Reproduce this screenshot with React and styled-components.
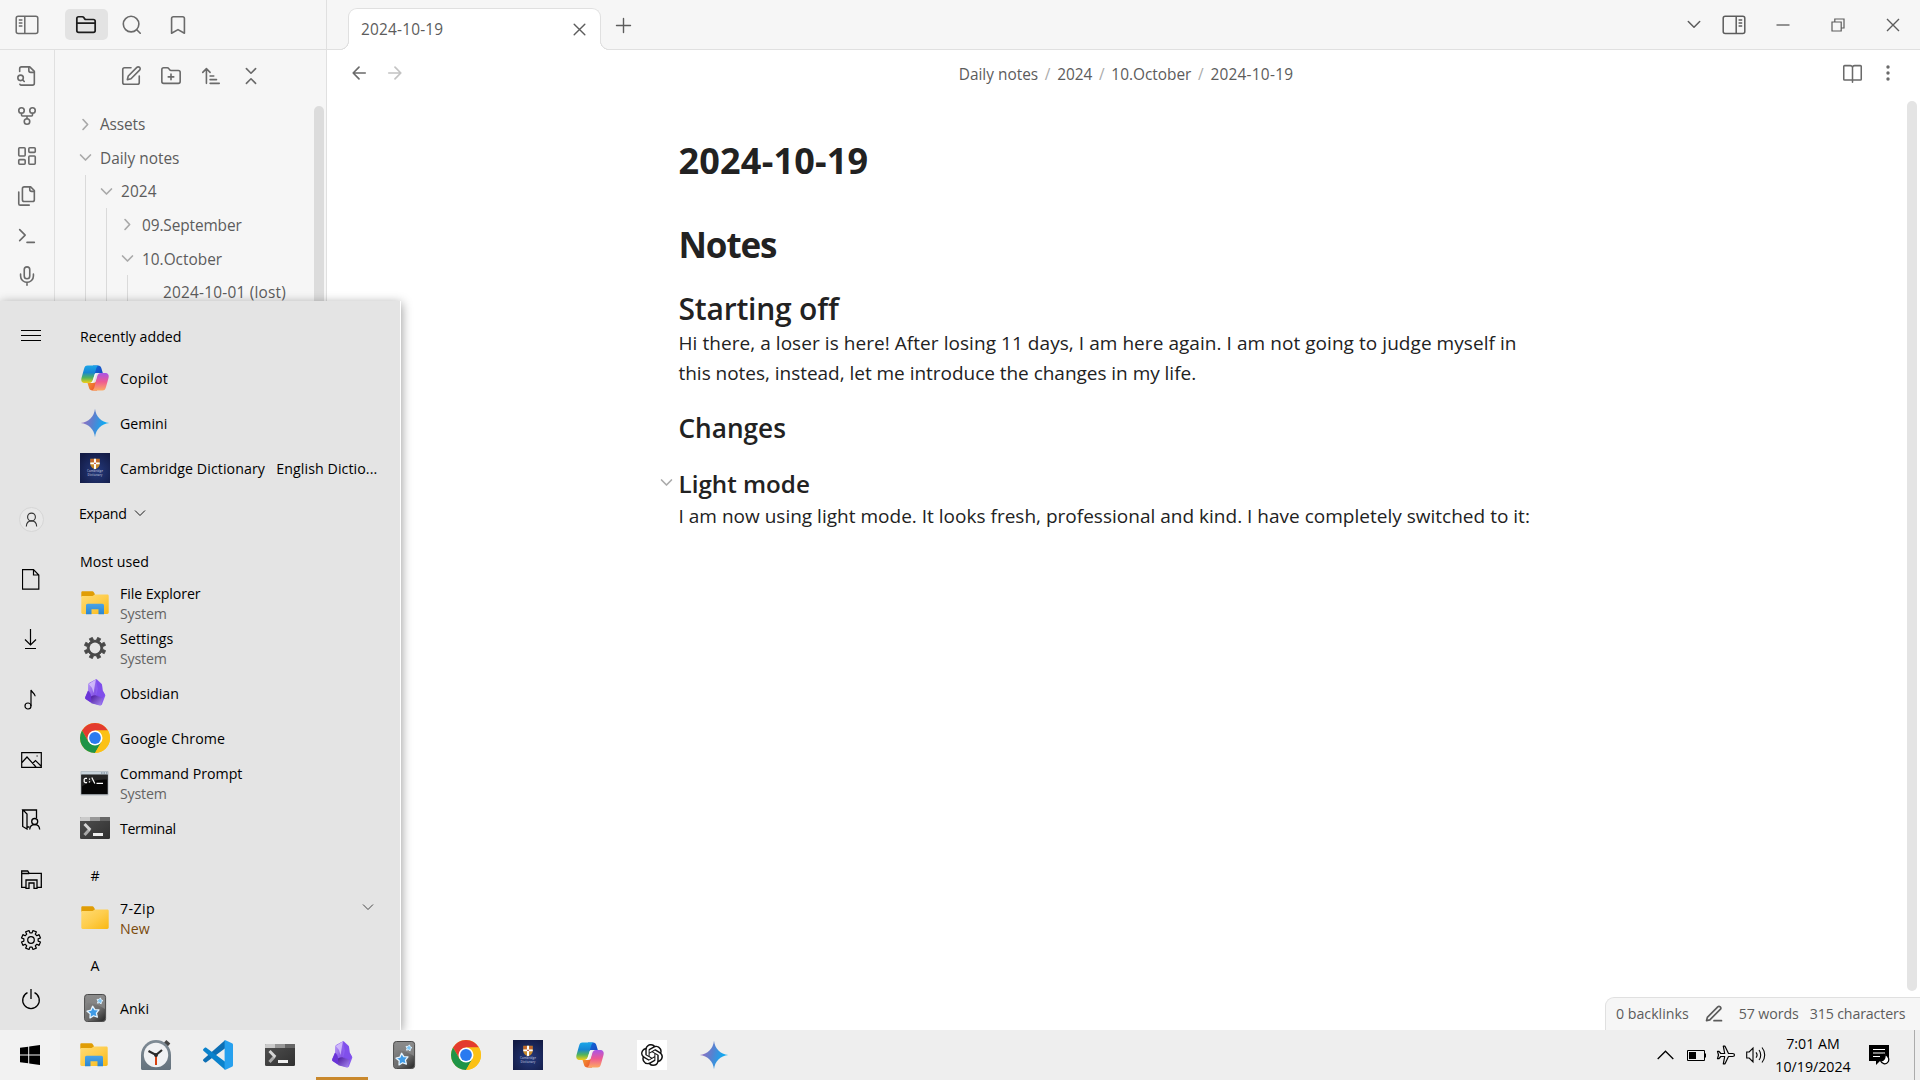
import React from 'react';
import styled, { createGlobalStyle, css } from 'styled-components';
import { SiOpenai } from 'react-icons/si';

const Global = createGlobalStyle`
  * { box-sizing: border-box; }
  body { margin: 0; overflow: hidden; background: #fff; font-family: 'Open Sans', 'Noto Sans', sans-serif; color: #222; }
  svg { display: block; flex: none; }
`;

/* ---------- shell ---------- */
const Desktop = styled.div`
  position: relative;
  width: 1920px;
  height: 1080px;
  display: flex;
  flex-direction: column;
  overflow: hidden;
`;
const ObsidianWindow = styled.div`
  height: 1030px;
  display: flex;
  position: relative;
`;
const SidePane = styled.div`
  width: 327px;
  border-right: 1px solid #e0e0e0;
  background: #f6f6f6;
  display: flex;
  flex-direction: column;
`;
const MainPane = styled.div`
  flex: 1;
  display: flex;
  flex-direction: column;
  min-width: 0;
`;
const Header = styled.div`
  height: 50px;
  flex: none;
  border-bottom: 1px solid #e0e0e0;
  background: #f6f6f6;
  display: flex;
  color: #5c5c5c;
`;
const ToggleSlot = styled.div`
  width: 54px;
  height: 50px;
  display: flex;
  align-items: center;
  justify-content: center;
  color: #6a6a6a;
`;
const SideTabs = styled.div`
  display: flex;
  gap: 3px;
  padding: 9px 0 0 11px;
`;
const SideTab = styled.div`
  width: 43px;
  height: 31px;
  border-radius: 5px;
  display: flex;
  align-items: center;
  justify-content: center;
  padding-right: 1px;
  color: ${(p) => (p.$active ? '#1c1c1c' : '#6a6a6a')};
  background: ${(p) => (p.$active ? '#e3e3e3' : 'transparent')};
`;
const Label = styled.span`
  white-space: pre;
  letter-spacing: ${(p) => p.$ls || 0}px;
`;

/* ---------- left sidebar ---------- */
const SideBody = styled.div`
  flex: 1;
  display: flex;
  min-height: 0;
`;
const Ribbon = styled.div`
  width: 55px;
  border-right: 1px solid #e0e0e0;
  padding-top: 6px;
  display: flex;
  flex-direction: column;
  align-items: center;
  color: #6a6a6a;
`;
const RibbonItem = styled.div`
  height: 40px;
  display: flex;
  align-items: center;
`;
const Explorer = styled.div`
  flex: 1;
  position: relative;
  overflow: hidden;
`;
const ExplorerTools = styled.div`
  height: 52px;
  display: flex;
  justify-content: center;
  color: #6a6a6a;
`;
const Tool = styled.div`
  width: 40px;
  display: flex;
  align-items: center;
  justify-content: center;
`;
const Tree = styled.div`
  padding-top: 5.4px;
`;
const TreeRow = styled.div`
  height: 33.6px;
  display: flex;
  align-items: center;
  gap: 9px;
  padding-left: 22px;
  font-size: 15.4px;
  color: #5c5c5c;
  & > span {
    padding-top: 1px;
  }
`;
const Twist = styled.div`
  width: 14px;
  height: 17px;
  color: #a9a9a9;
`;
const Branch = styled.div`
  margin-left: 30px;
  border-left: 1px solid #dadada;
`;
const BranchRows = styled.div`
  margin-left: -10px;
`;
const ScrollThumb = styled.div`
  position: absolute;
  width: 10px;
  border-radius: 5px;
  background: ${(p) => p.$color};
  top: ${(p) => p.$top}px;
  right: ${(p) => p.$right}px;
  height: ${(p) => p.$h}px;
`;

/* ---------- tab strip ---------- */
const foot = css`
  content: '';
  position: absolute;
  bottom: 0;
  width: 9px;
  height: 9px;
`;
const DocTab = styled.div`
  position: relative;
  margin: 8px 0 -1px 21px;
  width: 253px;
  height: 42px;
  border: 1px solid #e0e0e0;
  border-bottom: 0;
  border-radius: 9px 9px 0 0;
  background: #fff;
  display: flex;
  align-items: center;
  justify-content: space-between;
  padding: 0 12px 1px 12px;
  font-size: 15.4px;
  color: #5c5c5c;
  &::before {
    ${foot}
    left: -9px;
    background: radial-gradient(circle at 0 0, #f6f6f6 7.6px, #e0e0e0 8.2px 8.8px, #fff 9.2px);
  }
  &::after {
    ${foot}
    right: -9px;
    background: radial-gradient(circle at 100% 0, #f6f6f6 7.6px, #e0e0e0 8.2px 8.8px, #fff 9.2px);
  }
`;
const NewTab = styled.div`
  width: 44px;
  padding-top: 2px;
  display: flex;
  align-items: center;
  justify-content: center;
`;
const WindowControls = styled.div`
  margin-left: auto;
  display: flex;
  align-items: center;
`;
const Control = styled.div`
  width: ${(p) => p.$w}px;
  display: flex;
  justify-content: center;
  color: #5c5c5c;
`;

/* ---------- document ---------- */
const ViewHeader = styled.div`
  height: 50px;
  padding-left: 5px;
  display: grid;
  grid-template-columns: 1fr auto 1fr;
  align-items: center;
  color: #6a6a6a;
`;
const NavGroup = styled.div`
  display: flex;
  padding: 0 0 4px 9px;
`;
const ActionGroup = styled.div`
  display: flex;
  justify-content: flex-end;
  padding: 0 15px 4px 0;
`;
const NavBtn = styled.div`
  width: ${(p) => p.$w || 36}px;
  display: flex;
  justify-content: center;
  align-items: center;
  opacity: ${(p) => (p.$off ? 0.4 : 1)};
`;
const Crumbs = styled.div`
  display: flex;
  gap: 7.5px;
  padding-bottom: 1px;
  font-size: 15.4px;
  color: #5c5c5c;
`;
const Slash = styled.span`
  width: 4px;
  color: #ababab;
  display: flex;
  justify-content: center;
`;
const Editor = styled.div`
  flex: 1;
  position: relative;
  padding: 36.5px 0 0 351.5px;
`;
const Title = styled.h1`
  margin: 0;
  font-size: 36px;
  line-height: 48px;
  font-weight: 700;
  letter-spacing: 0.2px;
`;
const H1 = styled.h1`
  margin: 36px 0 0;
  font-size: 35px;
  line-height: 48px;
  font-weight: 700;
  letter-spacing: -1.1px;
`;
const H2 = styled.h2`
  margin: 22px 0 0;
  font-size: 30px;
  line-height: 36px;
  font-weight: 600;
  letter-spacing: -0.2px;
`;
const H3 = styled.h3`
  margin: 22.3px 0 0;
  font-size: 26.2px;
  line-height: 36px;
  font-weight: 600;
`;
const H4 = styled.h4`
  position: relative;
  margin: 20.8px 0 0;
  font-size: 24.2px;
  line-height: 34px;
  font-weight: 600;
`;
const Fold = styled.span`
  position: absolute;
  left: -21px;
  top: 7px;
  color: #ababab;
`;
const Para = styled.p`
  margin: ${(p) => p.$mt || 0}px 0 0;
  font-size: 19px;
  line-height: 30px;
  display: flex;
  flex-direction: column;
`;
const StatusBar = styled.div`
  position: absolute;
  right: 0;
  bottom: 0;
  width: 315px;
  height: 33px;
  border: solid #e0e0e0;
  border-width: 1px 0 0 1px;
  border-top-left-radius: 9px;
  background: #f6f6f6;
  display: flex;
  align-items: center;
  padding: 0 0 1px 10px;
  font-size: 14.2px;
  color: #5c5c5c;
`;
const StatusIcon = styled.div`
  width: 50px;
  display: flex;
  justify-content: center;
  padding-left: 1px;
`;
const StatusGap = styled.div`
  width: 11px;
`;

/* ---------- start menu ---------- */
const StartMenu = styled.div`
  position: absolute;
  left: 0;
  top: 301px;
  width: 401px;
  height: 729px;
  background: #e4e4e4;
  border-right: 1px solid #fff;
  box-shadow: 1px 2px 10px rgba(0, 0, 0, 0.38);
  display: flex;
  color: #000;
  font-size: 14.2px;
`;
const Rail = styled.div`
  width: 62px;
  display: flex;
  flex-direction: column;
  padding-top: 5px;
`;
const RailItem = styled.div`
  height: 60px;
  margin-top: ${(p) => (p.$push ? 'auto' : 0)};
  display: flex;
  align-items: center;
  justify-content: center;
  padding-bottom: 1px;
`;
const Avatar = styled.div`
  width: 25px;
  height: 25px;
  border-radius: 50%;
  border: 1px solid #d6d6d6;
  background: #e8e8e8;
  display: flex;
  align-items: center;
  justify-content: center;
  color: #333;
`;
const AppList = styled.div`
  flex: 1;
  padding: 10px 20px 0 18px;
  display: flex;
  flex-direction: column;
`;
const GroupTitle = styled.div`
  height: 45px;
  line-height: 51px;
`;
const ExpandRow = styled.div`
  height: 45px;
  display: flex;
  align-items: center;
  gap: 7px;
  margin-left: -1px;
`;
const Letter = styled.div`
  height: 45px;
  line-height: 52px;
  width: 30px;
  text-align: center;
`;
const AppRow = styled.div`
  height: 45px;
  display: flex;
  align-items: center;
  gap: 10px;
  & > span {
    padding-top: ${(p) => (p.$drop ? 2 : 0)}px;
  }
`;
const AppIcon = styled.div`
  width: 30px;
  height: 30px;
`;
const AppText = styled.div`
  display: flex;
  flex-direction: column;
  line-height: 20px;
  padding-top: 2px;
  flex: 1;
`;
const Sub = styled.span`
  color: ${(p) => (p.$fresh ? '#7a4a0c' : '#636363')};
  letter-spacing: ${(p) => (p.$fresh ? 0.1 : -0.2)}px;
`;
const RowChevron = styled.div`
  padding: 0 6px 0 0;
  height: 30px;
  color: #333;
`;

/* ---------- taskbar ---------- */
const Taskbar = styled.div`
  position: relative;
  height: 50px;
  background: #eeeeee;
  display: flex;
`;
const StartButton = styled.div`
  width: 60px;
  background: #f2f2f2;
  display: flex;
  align-items: center;
  justify-content: center;
`;
const TaskItem = styled.div`
  width: 52px;
  margin: 0 5px;
  display: flex;
  align-items: center;
  justify-content: center;
  border-bottom: 3px solid ${(p) => (p.$active ? '#c9882c' : 'transparent')};
  padding-top: 3px;
`;
const TaskItems = styled.div`
  display: flex;
  padding-left: 3px;
`;
const Tray = styled.div`
  margin-left: auto;
  display: flex;
  align-items: center;
  color: #000;
`;
const TraySlot = styled.div`
  width: ${(p) => p.$w}px;
  display: flex;
  justify-content: center;
`;
const Clock = styled.div`
  width: 87px;
  padding-right: 3px;
  display: flex;
  flex-direction: column;
  align-items: center;
  font-size: 14.2px;
  line-height: 23px;
`;
const ShowDesktop = styled.div`
  width: 6px;
  height: 50px;
  border-left: 1px solid #ababab;
`;

/* ---------- line icons ---------- */
const Line = ({ s = 22, w = 1.75, d, children, vb = '0 0 24 24', h, cap = 'round' }) => (
  <svg width={s} height={h || s} viewBox={vb} fill="none" stroke="currentColor" strokeWidth={w} strokeLinecap={cap} strokeLinejoin={cap === 'round' ? 'round' : 'miter'}>
    {d && <path d={d} />}
    {children}
  </svg>
);
const PanelToggle = ({ flip }) => (
  <svg width="24" height="20" viewBox="0 0 24 20" fill="none" stroke="currentColor" strokeWidth="1.5" transform={flip ? 'scale(-1 1)' : undefined}>
    <rect x="1.2" y="1.2" width="21.6" height="17.4" rx="2" />
    <path d="M9.8 1v18M3.8 5h3.6M3.8 8h3.6M3.8 11h3.6" />
  </svg>
);
const ChevR = () => <Line s={17} w={2.4} d="m8.500 5 6.500 7-6.500 7" />;
const ChevD = () => <Line s={17} w={2.4} d="m5 8.500 7 7 7-7" />;
const ThinDown = () => <Line s={12} h={8} vb="0 0 12 8" w={0.9} cap="butt" d="M1 1.5 6 6.5 11 1.5" />;

const ribbon = [
  <Line><path d="M14 2v4a2 2 0 0 0 2 2h4" /><path d="M4.27 21A2 2 0 0 0 6 22h12a2 2 0 0 0 2-2V7l-5-5H6a2 2 0 0 0-2 2v3" /><path d="m9 18-1.5-1.5" /><circle cx="5" cy="14" r="3" /></Line>,
  <Line><circle cx="12" cy="18" r="3" /><circle cx="6" cy="6" r="3" /><circle cx="18" cy="6" r="3" /><path d="M18 9v2c0 .6-.4 1-1 1H7c-.6 0-1-.4-1-1V9M12 12v3" /></Line>,
  <Line><rect x="3" y="3" width="7" height="9" rx="1" /><rect x="14" y="3" width="7" height="5" rx="1" /><rect x="14" y="12" width="7" height="9" rx="1" /><rect x="3" y="16" width="7" height="5" rx="1" /></Line>,
  <Line><path d="M15 2v3a2 2 0 0 0 2 2h3" /><path d="M9 18a2 2 0 0 1-2-2V4a2 2 0 0 1 2-2h7l4 4v10a2 2 0 0 1-2 2Z" /><path d="M3 7.6v12.8A1.6 1.6 0 0 0 4.6 22h9.8" /></Line>,
  <Line d="m4 17 6-6-6-6M12 19h8" />,
  <Line d="M12 2a3 3 0 0 0-3 3v7a3 3 0 0 0 6 0V5a3 3 0 0 0-3-3ZM19 10v2a7 7 0 0 1-14 0v-2M12 19v3" />,
];
const explorerTools = [
  'M12 3H5a2 2 0 0 0-2 2v14a2 2 0 0 0 2 2h14a2 2 0 0 0 2-2v-7M18.375 2.625a2.121 2.121 0 1 1 3 3L12 15l-4 1 1-4Z',
  'M12 10v6M9 13h6M20 20a2 2 0 0 0 2-2V8a2 2 0 0 0-2-2h-7.9a2 2 0 0 1-1.69-.9L9.6 3.9A2 2 0 0 0 7.93 3H4a2 2 0 0 0-2 2v13a2 2 0 0 0 2 2Z',
  'm3 8 4-4 4 4M7 4v16M11 12h4M11 16h7M11 20h10',
  'm7 20 5-5 5 5M7 4l5 5 5-5',
];

/* ---------- application icons ---------- */
const gearPath = (teeth, ro, ri, a, b) => {
  const pts = [];
  for (let i = 0; i < teeth; i++) {
    const c = ((i + 0.5) * 2 * Math.PI) / teeth;
    [[ri, -b], [ro, -a], [ro, a], [ri, b]].forEach(([r, o]) => pts.push(`${(r * Math.cos(c + o)).toFixed(2)} ${(r * Math.sin(c + o)).toFixed(2)}`));
  }
  return `M${pts.join('L')}Z`;
};
const GearSolid = () => (
  <svg width="30" height="30" viewBox="-15 -15 30 30">
    <path fill="#484848" stroke="#484848" strokeWidth="1" strokeLinejoin="round" d={gearPath(8, 10.8, 7.8, 0.15, 0.2)} />
    <circle r="5.4" fill="#e4e4e4" />
  </svg>
);
const GearLine = () => (
  <svg width="22" height="22" viewBox="-11 -11 22 22" fill="none" stroke="#000" strokeWidth="1.2" strokeLinejoin="round">
    <path d={gearPath(8, 9.7, 7.2, 0.19, 0.24)} />
    <circle r="3.3" />
  </svg>
);
const Copilot = ({ id }) => (
  <svg width="30" height="30" viewBox="0 0 30 30">
    <defs>
      <linearGradient id={`${id}a`} x1="0" y1="0" x2="0" y2="1"><stop offset="0" stopColor="#1ba6e8" /><stop offset=".4" stopColor="#1786d4" /><stop offset=".7" stopColor="#52b45c" /><stop offset="1" stopColor="#f5cf16" /></linearGradient>
      <linearGradient id={`${id}b`} x1="0" y1="0" x2="0" y2="1"><stop offset="0" stopColor="#a855e8" /><stop offset=".5" stopColor="#ee5a92" /><stop offset="1" stopColor="#fdab62" /></linearGradient>
      <linearGradient id={`${id}c`} x1="0" y1="0" x2="1" y2="1"><stop offset="0" stopColor="#0f6fe0" /><stop offset="1" stopColor="#1b3fb5" /></linearGradient>
      <linearGradient id={`${id}d`} x1="0" y1="0" x2="1" y2="1"><stop offset="0" stopColor="#f8b030" /><stop offset="1" stopColor="#e8442c" /></linearGradient>
    </defs>
    <path fill={`url(#${id}c)`} d="M13 2.500h5c2 0 2.800 1 3.400 2.800L22.800 10H17c-2 0-3 .8-3.600 2.500L12 16z" />
    <path fill={`url(#${id}d)`} d="M17 27.500h-4.500c-2 0-3-1-3.500-2.800L7.500 20H13c2 0 2.800-.8 3.400-2.500L18 13z" />
    <path fill={`url(#${id}a)`} d="M7.500 2.500H19c-1.600.2-2.300 1.400-2.800 3L13 16.500c-.7 2.300-1.700 3.500-4 3.500H5c-3 0-4.300-2-3.500-5L4 6c.6-2.400 1.500-3.500 3.500-3.500z" />
    <path fill={`url(#${id}b)`} d="M22.500 27.500H11.500c1.600-.2 2.300-1.400 2.800-3L17.200 13.500c.6-2.300 1.600-3.500 3.900-3.500H25c3 0 4.300 2 3.500 5L26 24c-.6 2.400-1.500 3.500-3.500 3.500z" />
    <path fill="#fff" opacity=".75" d="M15.200 10.200h2.600c-1.400.5-2 1.600-2.400 3L14 18c-.4 1.200-.9 1.800-2 2h-1.500c1.400-.5 2-1.900 2.500-3.500z" />
  </svg>
);
const Gemini = ({ id }) => (
  <svg width="30" height="30" viewBox="0 0 30 30">
    <defs><linearGradient id={id} x1="0" y1="0" x2="1" y2=".25"><stop offset=".1" stopColor="#9a6fc0" /><stop offset=".5" stopColor="#5a80cf" /><stop offset=".9" stopColor="#12a8f0" /></linearGradient></defs>
    <path fill={`url(#${id})`} d="M15 .8C15.800 8.600 21.400 14.200 29.200 15 21.400 15.800 15.800 21.400 15 29.200 14.200 21.400 8.600 15.800.8 15 8.600 14.200 14.200 8.600 15 .8z" />
  </svg>
);
const Crest = styled.div`
  width: 30px;
  height: 30px;
  background: radial-gradient(circle at 55% 60%, #24397c, #131b45 85%);
  color: #a3abc9;
  display: flex;
  flex-direction: column;
  align-items: center;
  padding-top: 5px;
  font-size: 3px;
  font-weight: 600;
  line-height: 3.5px;
`;
const Cambridge = () => (
  <Crest>
    <svg width="10" height="12" viewBox="0 0 11 12">
      <path fill="#c98a2c" d="M.3.3h10.400v5.700c0 3-2.400 4.700-5.200 5.900C2.700 10.700.3 9 .3 6z" />
      <path fill="#c2452f" d="M.8.8h3.200v3H.8zM7 .8h3.200v3H7z" opacity=".55" />
      <path fill="#fff" d="M4.400.3h2.200v11L5.500 11.900 4.400 11.300zM.3 4.300h10.400v2H.3z" />
      <path fill="#c2452f" d="M4.600 4.500h1.800v1.600H4.600z" />
    </svg>
    <span>Cambridge</span>
    <span>Dictionary</span>
  </Crest>
);
const Folder = ({ id, explorer }) => (
  <svg width="30" height="30" viewBox="0 0 30 30">
    <defs>
      <linearGradient id={id} x1="0" y1="0" x2="1" y2="1"><stop offset="0" stopColor="#ffdb74" /><stop offset=".5" stopColor="#fecd4c" /><stop offset="1" stopColor="#f9b812" /></linearGradient>
      <linearGradient id={`${id}b`} x1="0" y1="0" x2="0" y2="1"><stop offset="0" stopColor="#4aa3e8" /><stop offset="1" stopColor="#2b86d0" /></linearGradient>
    </defs>
    <path fill="#e09d05" d="M1.300 4.700c0-.9.5-1.400 1.300-1.400h9.200c1 0 1.600.3 2 1l1.200 2-1.500 2.600H1.300z" />
    <path fill={`url(#${id})`} d="M1.300 8h11.200l2.400-1.500h12.300c.9 0 1.500.5 1.500 1.400V24.500c0 .9-.6 1.400-1.500 1.400H2.700c-.9 0-1.400-.5-1.400-1.400z" />
    {explorer && <path fill={`url(#${id}b)`} d="M6 26.300V17.500c0-1 .6-1.700 1.700-1.700h14.600c1.100 0 1.700.7 1.700 1.700v8.800h-5.500v-5h-7v5z" />}
  </svg>
);
const ObsidianGem = ({ id }) => (
  <svg width="30" height="30" viewBox="0 0 30 30">
    <defs>
      <linearGradient id={id} x1="0" y1="0" x2="1" y2="1"><stop offset="0" stopColor="#c9b0fa" /><stop offset="1" stopColor="#7038dc" /></linearGradient>
      <linearGradient id={`${id}b`} x1="0" y1="0" x2="1" y2="1"><stop offset="0" stopColor="#4c1a9e" /><stop offset="1" stopColor="#a98cf5" /></linearGradient>
    </defs>
    <path fill="#8a5cf0" d="M15.500 1.500c.5-.4 1-.3 1.500.1l4.300 4c.5.5.7 1 .8 1.700l.6 5.200 2.400 4.200c.3.5.3 1 0 1.500l-3.100 8c-.3.800-.8 1.100-1.600 1l-8.500-2.200-5.600-3.500c-1.100-.7-1.400-1.400-1-2.500l2.800-6.500.3-6c0-.6.2-1 .7-1.400z" />
    <path fill={`url(#${id})`} d="M15.800 1.400 8.900 5.700c-.4.3-.6.700-.6 1.300L8 13c3.500 1 4 4 3 8l4-2.300 1-6.500z" opacity=".85" />
    <path fill="#d8c6fc" d="m15.800 1.400-7 4.500L12 10l1.500 5z" opacity=".8" />
    <path fill="#6a34d6" d="M8 12.800 5.300 19c-.4 1.100-.1 1.800 1 2.500L11.500 25c-.2-4.500.2-9.500-3.500-12.200z" />
    <path fill={`url(#${id}b)`} d="M11 18.500c3-2 8-1.500 11.500 1.500l-1.600 7c-.3.600-.7.700-1.300.6l-8.300-2.300z" />
    <path fill="#7c4ae8" d="m16 1.500 2 9.500-2 6.800 6.500 2.500 2.500-3.500-2.500-4.500-.6-5.500z" opacity=".7" />
  </svg>
);
const Chrome = () => (
  <svg width="30" height="30" viewBox="-15 -15 30 30">
    <circle r="15" fill="#fbc116" />
    <path fill="#e33b2e" d="M-12.990-7.500A15 15 0 0 1 12.990-7.500H0L-6.500 3.750z" />
    <path fill="#1f9447" d="M-12.990-7.500A15 15 0 0 0 0 15L6.500 3.750H-6.500z" />
    <path fill="#fbc116" d="M12.990-7.500A15 15 0 0 1 0 15L6.500 3.750 0-7.500z" />
    <circle r="7.500" fill="#fff" />
    <circle r="5.900" fill="#2a7af0" />
  </svg>
);
const Cmd = () => (
  <svg width="30" height="30" viewBox="0 0 30 30">
    <rect x=".5" y="3" width="28" height="24.500" rx="1" fill="#b5bcc2" />
    <rect x="1.500" y="3.800" width="26" height="2.400" fill="#c9d4dc" />
    <path stroke="#6c7f90" strokeWidth="1" d="M21 5h1.500M23.500 5H25M26 5h1.200" />
    <rect x="1.300" y="6.700" width="26.400" height="19.500" fill="#050505" />
    <path fill="#333" d="M1.300 6.700h26.400v5C18 11 8 14 1.300 19z" opacity=".7" />
    <path stroke="#fff" strokeWidth="1.200" fill="none" d="M7 10.300H5.200l-1 1v2.400l1 1H7M9.500 10.500v1.300M9.500 13.200v1.300M11.800 9.500l3 6M16.500 15.300h6.500" />
  </svg>
);
const Terminal = ({ id }) => (
  <svg width="30" height="30" viewBox="0 0 30 30">
    <defs><linearGradient id={id} x1="0" y1="0" x2="1" y2="1"><stop offset="0" stopColor="#505050" /><stop offset="1" stopColor="#303030" /></linearGradient></defs>
    <rect y="4" width="30" height="22" rx="1.300" fill={`url(#${id})`} />
    <path fill="#cacaca" d="M1.300 4H10v4H0V5.300C0 4.500.5 4 1.300 4z" />
    <path fill="#979797" d="M10 4h10v4H10z" />
    <path fill="#666" d="M20 4h8.700c.8 0 1.300.5 1.300 1.300V8H20z" />
    <path fill="none" stroke="#a9a9a9" strokeWidth="3" d="m4.500 22 5-5.500" />
    <path fill="none" stroke="#d6d6d6" strokeWidth="3" d="m4.500 11 5.800 6" />
    <path fill="#eee" d="M13 20h10v3H13z" />
  </svg>
);
const star = (cx, cy, r, k = 0.5, rot = 0) =>
  `M${Array.from({ length: 10 }, (_, i) => {
    const a = -Math.PI / 2 + (i * Math.PI) / 5 + rot;
    const q = i % 2 ? r * k : r;
    return `${(cx + q * Math.cos(a)).toFixed(2)} ${(cy + q * Math.sin(a)).toFixed(2)}`;
  }).join('L')}Z`;
const Anki = ({ id }) => (
  <svg width="30" height="30" viewBox="0 0 30 30">
    <defs>
      <linearGradient id={id} x1="0" y1="0" x2="0" y2="1"><stop offset="0" stopColor="#8c8c8c" /><stop offset="1" stopColor="#747474" /></linearGradient>
      <linearGradient id={`${id}b`} x1="0" y1="0" x2="1" y2="1"><stop offset="0" stopColor="#858585" /><stop offset=".55" stopColor="#6a6a6a" /><stop offset="1" stopColor="#262626" /></linearGradient>
    </defs>
    <rect x="4.600" y="1.500" width="21" height="27" rx="2.800" fill={`url(#${id})`} stroke="#4a4a4a" strokeWidth="1" />
    <path fill={`url(#${id}b)`} d="M5 10c7 0 13 1.500 20 6v9.500c0 1.500-1 2.500-2.500 2.500h-15C6 28 5 27 5 25.500z" />
    <path fill="#3f9be6" stroke="#e6f5ff" strokeWidth="1.300" strokeLinejoin="round" d={star(13.200, 19.500, 6.300, 0.52, -0.1)} />
    <path fill="#7cc4f4" stroke="#e6f5ff" strokeWidth=".9" strokeLinejoin="round" d={star(19.800, 8, 3.200, 0.55, 0.2)} />
  </svg>
);
const AlarmClock = () => (
  <svg width="30" height="30" viewBox="0 0 30 30">
    <defs><linearGradient id="alarm" x1="0" y1="0" x2="0" y2="1"><stop offset="0" stopColor="#7f8b95" /><stop offset="1" stopColor="#65727d" /></linearGradient></defs>
    <path stroke="#444" strokeWidth="4" d="m24 1.500 4 3.500" />
    <path fill="url(#alarm)" d="M0 15a15 15 0 0 1 30 0v13.500c0 .9-.6 1.500-1.500 1.500h-27C.6 30 0 29.400 0 28.500z" />
    <circle cx="15" cy="15" r="12.200" fill="#f0f1f3" />
    <path stroke="#d8400f" strokeWidth="2" d="M15 15v10" />
    <path stroke="#2b2b2b" strokeWidth="2.200" fill="none" d="m7.500 11 7.500 4 6-5" />
    <circle cx="15" cy="15" r="2" fill="#2b2b2b" />
  </svg>
);
const VsCode = () => (
  <svg width="30" height="30" viewBox="0 0 30 30">
    <path fill="#0d6fb4" d="M22 .3 22.500 8 3.300 22.300c-.5.4-1.100.3-1.500 0L.4 21c-.5-.5-.5-1.200 0-1.700z" />
    <path fill="#0a82cc" d="M22 29.700 22.500 22 3.300 7.700c-.5-.4-1.100-.3-1.500 0L.4 9c-.5.5-.5 1.200 0 1.700z" />
    <path fill="#26a0ee" d="M22 .3c.3-.1.600-.1 1 .1l6 2.900c.6.300 1 .8 1 1.500v20.400c0 .7-.4 1.200-1 1.500l-6 2.900c-.4.2-.7.200-1 .1-.700-.1-.4-.5-.4-1.200V1.500c0-.7-.3-1.100.4-1.200z" />
  </svg>
);
const GptTile = styled.div`
  width: 30px;
  height: 30px;
  background: #fff;
  display: flex;
  align-items: center;
  justify-content: center;
  color: #111;
`;
const Gpt = () => <GptTile><SiOpenai size={22} /></GptTile>;

const rail = [
  <Line s={18} h={21} vb="0 0 18 21" w={1.2} cap="butt" d="M.500.700h11l5.300 5.300v14.200H.500zM11.500.700v5.300h5.300" />,
  <Line s={14} h={21} vb="0 0 14 21" w={1.2} cap="butt" d="M6.500 0v16M1 10.500 6.500 16l5.500-5.500M1 19.500h11" />,
  <svg width="14" height="21" viewBox="0 0 14 21" fill="none" stroke="#000" strokeWidth="1.200"><circle cx="4" cy="17" r="3" /><path d="M7 17V1c.7 2.500 4.200 3.500 4.200 6.300" /></svg>,
  <Line s={21} h={16} vb="0 0 21 16" w={1.2} cap="butt" d="M.7.700h19.600v14.600H.7zM1 10.500 6 5l9 10M11.500 11.500l3-3 5.500 5.500M15.500 4h1.200" />,
  <Line s={20} h={21} vb="0 0 20 21" w={1.3} cap="butt"><path d="M8.500 18H6V5L2 1h13.500v8M1.700 1v16.500L6 20V5" /><circle cx="13.700" cy="12.500" r="3" /><path d="M8.700 20.500c.3-3 2.300-4.800 5-4.800s4.700 1.800 5 4.800" /></Line>,
  <Line s={21} h={19} vb="0 0 21 19" w={1.3} cap="butt" d="M4.500 17.300H.700V1h6l1.500 2.300h12.100v14H16.500M.7 3.500h7.500M5 18.300V10h11v8.300h-3V13H8v5.300z" />,
  <GearLine />,
  <Line s={20} h={21} vb="0 0 20 21" w={1.3} cap="butt" d="M10 0v10M6.500 3.700a8.300 8.300 0 1 0 7 0" />,
];

const App = () => (
  <Desktop>
    <Global />
    <ObsidianWindow>
      <SidePane>
        <Header>
          <ToggleSlot><PanelToggle /></ToggleSlot>
          <SideTabs>
            <SideTab $active><Line w={1.9}><path d="M20 20a2 2 0 0 0 2-2V8a2 2 0 0 0-2-2h-7.900a2 2 0 0 1-1.690-.9L9.600 3.900A2 2 0 0 0 7.930 3H4a2 2 0 0 0-2 2v13a2 2 0 0 0 2 2ZM2 10h20" /></Line></SideTab>
            <SideTab><Line><circle cx="11" cy="11" r="8.500" /><path d="m21 21-3.800-3.800" /></Line></SideTab>
            <SideTab><Line d="m19 21-7-4-7 4V5a2 2 0 0 1 2-2h10a2 2 0 0 1 2 2z" /></SideTab>
          </SideTabs>
        </Header>
        <SideBody>
          <Ribbon>{ribbon.map((icon, i) => <RibbonItem key={i}>{icon}</RibbonItem>)}</Ribbon>
          <Explorer>
            <ExplorerTools>{explorerTools.map((d) => <Tool key={d}><Line d={d} /></Tool>)}</ExplorerTools>
            <Tree>
              <TreeRow><Twist><ChevR /></Twist><Label $ls={-0.12}>Assets</Label></TreeRow>
              <TreeRow><Twist><ChevD /></Twist><Label>Daily notes</Label></TreeRow>
              <Branch><BranchRows>
                <TreeRow><Twist><ChevD /></Twist><Label $ls={0.1}>2024</Label></TreeRow>
                <Branch><BranchRows>
                  <TreeRow><Twist><ChevR /></Twist><Label $ls={-0.1}>09.September</Label></TreeRow>
                  <TreeRow><Twist><ChevD /></Twist><Label>10.October</Label></TreeRow>
                  <Branch><BranchRows>
                    <TreeRow><Twist /><Label $ls={0.22}>2024-10-01 (lost)</Label></TreeRow>
                  </BranchRows></Branch>
                </BranchRows></Branch>
              </BranchRows></Branch>
            </Tree>
            <ScrollThumb $color="#dcdcdc" $top={56} $right={2} $h={600} />
          </Explorer>
        </SideBody>
      </SidePane>
      <MainPane>
        <Header>
          <DocTab><Label $ls={0.2}>2024-10-19</Label><Line s={17} w={2} d="M4.500 4.500l15 15M19.500 4.500l-15 15" /></DocTab>
          <NewTab><Line s={21} w={1.6} d="M4 12h16M12 4v16" /></NewTab>
          <WindowControls>
            <Control $w={40}><Line s={14} h={9} vb="0 0 14 9" w={1.5} d="M1.300 1.500 7 7.300l5.700-5.800" /></Control>
            <Control $w={40}><PanelToggle flip /></Control>
            <Control $w={57}><Line s={14} h={2} vb="0 0 14 2" w={1.3} cap="butt" d="M.5 1h13" /></Control>
            <Control $w={54}><Line s={14} h={14} vb="0 0 14 14" w={1.2} cap="butt" d="M1 4h9.200v9H1zM3.800 4V1H13v9h-2.800" /></Control>
            <Control $w={55}><Line s={14} h={14} vb="0 0 14 14" w={1.400} cap="butt" d="M1 1l12 12M13 1 1 13" /></Control>
          </WindowControls>
        </Header>
        <ViewHeader>
          <NavGroup>
            <NavBtn><Line s={20} w={2} d="m12 19-7-7 7-7M19.500 12H5" /></NavBtn>
            <NavBtn $off><Line s={20} w={2} d="M4.500 12H19M12 5l7 7-7 7" /></NavBtn>
          </NavGroup>
          <Crumbs>
            <Label>Daily notes</Label><Slash>/</Slash>
            <Label>2024</Label><Slash>/</Slash>
            <Label>10.October</Label><Slash>/</Slash>
            <Label $ls={0.25}>2024-10-19</Label>
          </Crumbs>
          <ActionGroup>
            <NavBtn $w={35}><Line s={21}><path d="M12 6v16M3 19.500a1 1 0 0 1-1-1V4a1 1 0 0 1 1-1h6.500A2.500 2.500 0 0 1 12 5.500a2.500 2.500 0 0 1 2.500-2.500H21a1 1 0 0 1 1 1v14.500a1 1 0 0 1-1 1z" /></Line></NavBtn>
            <NavBtn $w={35}><svg width="4" height="18" viewBox="0 0 4 18" fill="currentColor"><circle cx="2" cy="3" r="1.700" /><circle cx="2" cy="9" r="1.700" /><circle cx="2" cy="15" r="1.700" /></svg></NavBtn>
          </ActionGroup>
        </ViewHeader>
        <Editor>
          <Title>2024-10-19</Title>
          <H1>Notes</H1>
          <H2>Starting off</H2>
          <Para $mt={1}>
            <Label $ls={0.056}>Hi there, a loser is here! After losing 11 days, I am here again. I am not going to judge myself in</Label>
            <Label $ls={-0.03}>this notes, instead, let me introduce the changes in my life.</Label>
          </Para>
          <H3>Changes</H3>
          <H4><Fold><ChevD /></Fold>Light mode</H4>
          <Para><Label $ls={0.01}>I am now using light mode. It looks fresh, professional and kind. I have completely switched to it:</Label></Para>
          <ScrollThumb $color="#e4e4e4" $top={1} $right={3} $h={890} />
        </Editor>
      </MainPane>
      <StatusBar>
        <Label>0 backlinks</Label>
        <StatusIcon><Line s={20} w={2} d="M12 20h9M16.500 3.500a2.120 2.120 0 0 1 3 3L7 19l-4 1 1-4Z" /></StatusIcon>
        <Label $ls={-0.08}>57 words</Label>
        <StatusGap />
        <Label $ls={-0.14}>315 characters</Label>
      </StatusBar>
    </ObsidianWindow>

    <StartMenu>
      <Rail>
        <RailItem><Line s={20} h={11} vb="0 0 20 11" w={1} cap="butt" d="M0 .5h20M0 5.500h20M0 10.500h20" /></RailItem>
        <RailItem $push><Avatar><Line s={13} h={15} vb="0 0 13 15" w={1.1} cap="butt"><circle cx="6.500" cy="5" r="3.900" /><path d="M1.300 14.500c.2-3.500 2.300-5.600 5.200-5.600s5 2.100 5.200 5.600" /></Line></Avatar></RailItem>
        {rail.map((icon, i) => <RailItem key={i}>{icon}</RailItem>)}
      </Rail>
      <AppList>
        <GroupTitle><Label>Recently added</Label></GroupTitle>
        <AppRow><AppIcon><Copilot id="cpA" /></AppIcon><Label $ls={0.15}>Copilot</Label></AppRow>
        <AppRow><AppIcon><Gemini id="gmA" /></AppIcon><Label>Gemini</Label></AppRow>
        <AppRow><AppIcon><Cambridge /></AppIcon><Label $ls={0.08}>{'Cambridge Dictionary   English Dictio...'}</Label></AppRow>
        <ExpandRow><Label $ls={-0.28}>Expand</Label><ThinDown /></ExpandRow>
        <GroupTitle><Label>Most used</Label></GroupTitle>
        <AppRow><AppIcon><Folder id="feA" explorer /></AppIcon><AppText><Label $ls={-0.1}>File Explorer</Label><Sub>System</Sub></AppText></AppRow>
        <AppRow><AppIcon><GearSolid /></AppIcon><AppText><Label $ls={0.1}>Settings</Label><Sub>System</Sub></AppText></AppRow>
        <AppRow $drop><AppIcon><ObsidianGem id="obA" /></AppIcon><Label>Obsidian</Label></AppRow>
        <AppRow $drop><AppIcon><Chrome /></AppIcon><Label $ls={0.14}>Google Chrome</Label></AppRow>
        <AppRow><AppIcon><Cmd /></AppIcon><AppText><Label>Command Prompt</Label><Sub>System</Sub></AppText></AppRow>
        <AppRow $drop><AppIcon><Terminal id="tmA" /></AppIcon><Label $ls={-0.35}>Terminal</Label></AppRow>
        <Letter>#</Letter>
        <AppRow><AppIcon><Folder id="zip" /></AppIcon><AppText><Label $ls={0.4}>7-Zip</Label><Sub $fresh>New</Sub></AppText><RowChevron><ThinDown /></RowChevron></AppRow>
        <Letter>A</Letter>
        <AppRow $drop><AppIcon><Anki id="anA" /></AppIcon><Label $ls={0.1}>Anki</Label></AppRow>
      </AppList>
    </StartMenu>

    <Taskbar>
      <StartButton><svg width="20" height="20" viewBox="0 0 20 20"><path d="M0 2.800 8.200 1.700v7.800H0zM9.200 1.500 20 0v9.500H9.200zM0 10.500h8.200v7.800L0 17.200zM9.200 10.500H20V20L9.200 18.500z" /></svg></StartButton>
      <TaskItems>
        <TaskItem><Folder id="feB" explorer /></TaskItem>
        <TaskItem><AlarmClock /></TaskItem>
        <TaskItem><VsCode /></TaskItem>
        <TaskItem><Terminal id="tmB" /></TaskItem>
        <TaskItem $active><ObsidianGem id="obB" /></TaskItem>
        <TaskItem><Anki id="anB" /></TaskItem>
        <TaskItem><Chrome /></TaskItem>
        <TaskItem><Cambridge /></TaskItem>
        <TaskItem><Copilot id="cpB" /></TaskItem>
        <TaskItem><Gpt /></TaskItem>
        <TaskItem><Gemini id="gmB" /></TaskItem>
      </TaskItems>
      <Tray>
        <TraySlot $w={31}><Line s={17} h={10} vb="0 0 17 10" w={1.300} cap="butt" d="M.7 9 8.500 1.200 16.300 9" /></TraySlot>
        <TraySlot $w={30}><svg width="19" height="11" viewBox="0 0 19 11"><path fill="none" stroke="#000" d="M.5.500h17v10H.5z" /><path d="M2 2h7v7H2zM18 3.500h1v4h-1z" /></svg></TraySlot>
        <TraySlot $w={30}><Line s={20} h={20} vb="0 0 20 20" w={1.200} d="M18.500 10c0-1-1-1.500-2-1.500h-4L9 1.200H7.300L8.700 8.500H4.800L3 6.300H1.500L2.500 10l-1 3.700H3l1.800-2.200h3.900L7.300 18.800H9l3.500-7.300h4c1 0 2-.5 2-1.500z" /></TraySlot>
        <TraySlot $w={30}><Line s={20} h={18} vb="0 0 20 18" w={1.100} cap="butt" d="M.7 6v6h2.500L7 15.800V2.200L3.200 6zM10 6.300c1.200 1.500 1.200 3.900 0 5.400M13 4c2.300 2.800 2.300 7.200 0 10M16 1.500c3.600 4.300 3.600 10.700 0 15" /></TraySlot>
        <Clock><Label>7:01 AM</Label><Label>10/19/2024</Label></Clock>
        <TraySlot $w={42}>
          <svg width="21" height="21" viewBox="0 0 21 21"><path d="M0 0h20v16h-9l-4 4v-4H0z" /><path stroke="#fff" strokeWidth="1.100" d="M4 4.500h12M4 8h12M4 11.500h7" /><path fill="#fff" stroke="#000" strokeWidth="1.200" d="M15.500 9.500c1.500 3-.5 6.500-4 6.300 1.300 3 5 4 7 1.800 2.500-2.500 1.200-7-3-8.100z" /></svg>
        </TraySlot>
      </Tray>
      <TraySlot $w={14} />
      <ShowDesktop />
    </Taskbar>
  </Desktop>
);

export default App;
